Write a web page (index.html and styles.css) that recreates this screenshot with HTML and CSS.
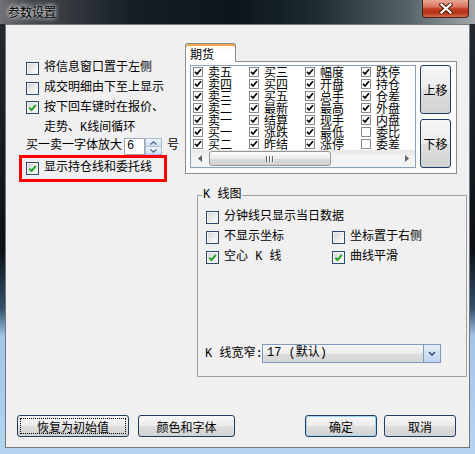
FILE: index.html
```html
<!DOCTYPE html>
<html>
<head>
  <title>参数设置</title>
<link rel="stylesheet" href="styles.css">
</head>
<body>
  <div class="window">
    <div class="titlebar">
      <span class="title">参数设置</span>
      <span class="close">
        <svg width="14" height="11" viewBox="0 0 14 11">
          <path d="M2.5,1.5 L11.5,9.5 M11.5,1.5 L2.5,9.5" stroke="#4a1c12" stroke-width="4.2" stroke-linecap="square"/>
          <path d="M2.5,1.5 L11.5,9.5 M11.5,1.5 L2.5,9.5" stroke="#fff" stroke-width="2.2" stroke-linecap="square"/>
        </svg>
      </span>
    </div>

    <div class="client">
      <div class="main">
        <div class="left">
          <div class="row"><span class="cb"></span>将信息窗口置于左侧</div>
          <div class="row"><span class="cb"></span>成交明细由下至上显示</div>
          <div class="row top"><span class="cb on"></span><span>按下回车键时在报价、<br>走势、K线间循环</span></div>
          <div class="row spin-row">
            买一卖一字体放大
            <span class="spin-input">6</span>
            <span class="spinner">
              <span class="spin-btn"><svg width="7" height="4" viewBox="0 0 7 4"><path d="M0.5,3.5 L3.5,0.8 L6.5,3.5" fill="none" stroke="#4a6a90" stroke-width="1.3"/></svg></span>
              <span class="spin-btn"><svg width="7" height="4" viewBox="0 0 7 4"><path d="M0.5,0.5 L3.5,3.2 L6.5,0.5" fill="none" stroke="#4a6a90" stroke-width="1.3"/></svg></span>
            </span>
            <span class="unit">号</span>
          </div>
          <div class="row marked"><span class="cb on"></span>显示持仓线和委托线</div>
        </div>

        <div class="right">
          <div class="tabbar">
            <span class="tab">期货</span>
            <span class="tabfill"></span>
          </div>
          <div class="tabpanel">
            <div class="listbox">
              <div class="items" id="items"></div>
              <div class="hscroll">
                <span class="arrow"><svg width="4" height="7" viewBox="0 0 4 7"><path d="M4,0 L0,3.5 L4,7 Z" fill="#606060"/></svg></span>
                <span class="track">
                  <span class="thumb"><span class="grip"></span><span class="grip"></span><span class="grip"></span></span>
                </span>
                <span class="arrow"><svg width="4" height="7" viewBox="0 0 4 7"><path d="M0,0 L4,3.5 L0,7 Z" fill="#606060"/></svg></span>
              </div>
            </div>
            <div class="movebtns">
              <button class="btn move">上移</button>
              <button class="btn move">下移</button>
            </div>
          </div>

          <fieldset class="kline">
            <legend>K 线图</legend>
            <div class="krow"><span class="cb"></span>分钟线只显示当日数据</div>
            <div class="krow">
              <span class="kcell"><span class="cb"></span>不显示坐标</span>
              <span class="kcell"><span class="cb"></span>坐标置于右侧</span>
            </div>
            <div class="krow">
              <span class="kcell"><span class="cb on"></span>空心 K 线</span>
              <span class="kcell"><span class="cb on"></span>曲线平滑</span>
            </div>
            <div class="krow width-row">
              <span class="wlabel">K 线宽窄:</span>
              <span class="select">
                <span class="select-text">17 (默认)</span>
                <span class="select-arrow"><svg width="8" height="5" viewBox="0 0 8 5"><path d="M1,1 L4,4 L7,1" fill="none" stroke="#2b4a70" stroke-width="1.6"/></svg></span>
              </span>
            </div>
          </fieldset>
        </div>
      </div>

      <div class="buttons">
        <button class="btn focus">恢复为初始值</button>
        <button class="btn">颜色和字体</button>
        <button class="btn ok">确定</button>
        <button class="btn">取消</button>
      </div>
    </div>
  </div>

  <script>
    var columns = [
      [["卖五",1],["卖四",1],["卖三",1],["卖二",1],["卖一",1],["买一",1],["买二",1]],
      [["买三",1],["买四",1],["买五",1],["最新",1],["结算",1],["涨跌",1],["昨结",1]],
      [["幅度",1],["开盘",1],["总手",1],["最高",1],["现手",1],["最低",1],["涨停",1]],
      [["跌停",1],["持仓",1],["仓差",1],["外盘",1],["内盘",1],["委比",0],["委差",0]]
    ];
    var check = '<svg width="8" height="8" viewBox="0 0 8 8"><path d="M1,3.8 L3,6 L7,1.3" fill="none" stroke="#000" stroke-width="1.7"/></svg>';
    var box = document.getElementById('items');
    columns.forEach(col => {
      col.forEach(item => {
        var el = document.createElement('div');
        el.className = 'item';
        el.innerHTML = '<span class="lcb">' + (item[1] ? check : '') + '</span>' + item[0];
        box.appendChild(el);
      });
    });
  </script>
</body>
</html>
```

FILE: styles.css
```css
body {
    margin: 0;
    font-family: "Liberation Mono", "Noto Sans CJK SC", monospace;
    font-size: 12px;
    color: #000;
  }

  .window {
    width: 475px;
    height: 454px;
    overflow: hidden;
    display: flex;
    flex-direction: column;
    background: linear-gradient(180deg, #262c30 0%, #0c1013 55%, #34506c 68%, #a4c4e6 74%, #b6d4f2 100%);
  }

  .titlebar {
    height: 24px;
    flex: none;
    display: flex;
    align-items: flex-start;
    background: linear-gradient(90deg, #707274 0%, #44484c 7%, #161e24 28%, #0c151c 50%, #1c2a32 66%, #56646a 86%, #a2a8ac 100%);
  }

  .title {
    padding: 5px 0 0 8px;
    line-height: 14px;
    color: #000;
    font-family: "Noto Sans CJK SC", sans-serif;
    text-shadow: 0 0 4px #fff, 0 0 6px rgba(255,255,255,0.8);
  }

  .close {
    margin-left: auto;
    margin-right: 6px;
    width: 45px;
    height: 17px;
    display: flex;
    align-items: center;
    justify-content: center;
    border: 1px solid #4e231c;
    border-top: none;
    border-radius: 0 0 4px 4px;
    background: linear-gradient(180deg, #e9a894 0%, #d87560 40%, #c23f22 52%, #b7331a 75%, #d46a48 100%);
  }

  .client {
    flex: none;
    margin: 0 5px;
    height: 424px;
    box-sizing: border-box;
    border: 1px solid #6f7880;
    background-color: #f0f0f0;
    display: flex;
    flex-direction: column;
  }

  .main {
    display: flex;
    padding: 18px 0 0 13px;
  }

  .left {
    width: 166px;
    padding-top: 15px;
  }

  .row {
    display: flex;
    align-items: center;
    height: 20px;
    line-height: 20px;
    padding-left: 7px;
    white-space: nowrap;
  }

  .row.top {
    height: 40px;
    align-items: flex-start;
  }

  .row.top .cb {
    margin-top: 3px;
  }

  .cb {
    width: 11px;
    height: 11px;
    flex: none;
    margin-right: 5px;
    border: 1px solid #2b4a70;
    box-shadow: inset 0 0 0 1px #f4f4f4;
    background: linear-gradient(135deg, #d2d2d2 0%, #ececec 55%, #ffffff 100%);
    display: inline-flex;
    align-items: center;
    justify-content: center;
  }

  .cb.on::after {
    content: "";
    width: 9px;
    height: 9px;
    background: url("data:image/svg+xml;utf8,<svg xmlns='http://www.w3.org/2000/svg' width='9' height='9' viewBox='0 0 9 9'><path d='M1.3,4.6 L3.5,7 L7.8,1.8' fill='none' stroke='%2322a022' stroke-width='1.9'/></svg>") no-repeat center;
  }

  .spin-row {
    height: 17px;
    line-height: 17px;
  }

  .spin-input {
    width: 17px;
    height: 15px;
    margin-left: 2px;
    padding-left: 2px;
    border: 1px solid #9ba8ba;
    background-color: #fff;
    line-height: 15px;
  }

  .spinner {
    width: 17px;
    height: 17px;
    display: flex;
    flex-direction: column;
  }

  .spin-btn {
    flex: 1;
    display: flex;
    align-items: center;
    justify-content: center;
    border: 1px solid #a9bdd6;
    background: linear-gradient(180deg, #eef4fb, #cfdff1);
  }

  .spin-btn + .spin-btn {
    border-top: none;
  }

  .unit {
    margin-left: 5px;
  }

  .marked {
    width: 138px;
    height: 21px;
    padding-left: 4px;
    border: 3px solid #ff0000;
    line-height: 21px;
  }

  .right {
    width: 272px;
  }

  .tabbar {
    display: flex;
    height: 19px;
  }

  .tab {
    width: 45px;
    padding-left: 4px;
    border: 1px solid #898c95;
    border-bottom: none;
    border-radius: 3px 3px 0 0;
    box-shadow: inset 0 2px 0 #f0a94a;
    background: linear-gradient(180deg, #fdf6ea 0%, #ffffff 40%);
    line-height: 20px;
    font-family: "Noto Sans CJK SC", sans-serif;
  }

  .tabfill {
    flex: 1;
    border-bottom: 1px solid #898c95;
  }

  .tabpanel {
    height: 112px;
    box-sizing: border-box;
    display: flex;
    gap: 4px;
    padding: 3px 0 0 4px;
    border: 1px solid #898c95;
    border-top: none;
    background-color: #fcfcfc;
  }

  .listbox {
    width: 226px;
    height: 103px;
    box-sizing: border-box;
    border: 1px solid #8da1b6;
    background-color: #fff;
    display: flex;
    flex-direction: column;
  }

  .items {
    height: 84px;
    overflow: hidden;
    display: grid;
    grid-auto-flow: column;
    grid-template-rows: repeat(7, 12px);
    grid-auto-columns: 56px;
  }

  .item {
    display: flex;
    align-items: center;
    height: 12px;
    line-height: 12px;
    white-space: nowrap;
    font-family: "Noto Sans CJK SC", sans-serif;
    font-size: 12px;
  }

  .lcb {
    width: 8px;
    height: 8px;
    flex: none;
    margin: 0 5px 0 2px;
    border: 1px solid #8a8a8a;
    background-color: #fff;
    display: inline-flex;
    align-items: center;
    justify-content: center;
  }

  .hscroll {
    height: 17px;
    display: flex;
    background: linear-gradient(180deg, #e6e6e6, #f4f4f4 40%, #f2f2f2);
  }

  .arrow {
    width: 17px;
    display: flex;
    align-items: center;
    justify-content: center;
  }

  .track {
    flex: 1;
    padding: 0 67px 0 1px;
  }

  .thumb {
    height: 15px;
    margin-top: 1px;
    box-sizing: border-box;
    border: 1px solid #979797;
    border-radius: 3px;
    background: linear-gradient(180deg, #fafafa 0%, #ececec 50%, #dadada 51%, #d4d4d4 100%);
    display: flex;
    align-items: center;
    justify-content: center;
    gap: 1px;
  }

  .grip {
    width: 1px;
    height: 6px;
    background-color: #606060;
    border-right: 1px solid #fff;
  }

  .movebtns {
    display: flex;
    flex-direction: column;
    gap: 5px;
  }

  .btn {
    height: 22px;
    padding: 0;
    border: 1px solid #1f3d63;
    border-radius: 3px;
    background: linear-gradient(180deg, #f7f7f7 0%, #ececec 48%, #dedede 52%, #d2d2d2 100%);
    font-family: "Noto Sans CJK SC", sans-serif;
    font-size: 12px;
    color: #000;
  }

  .btn.move {
    width: 31px;
    height: 49px;
  }

  .kline {
    height: 189px;
    box-sizing: border-box;
    margin: 14px 2px 0 12px;
    padding: 5px 8px 13px 8px;
    border: 1px solid #a0a0a0;
    display: flex;
    flex-direction: column;
  }

  .kline legend {
    margin-left: -4px;
    padding: 0 1px;
    line-height: 14px;
  }

  .krow {
    display: flex;
    align-items: center;
    height: 20px;
    line-height: 20px;
    white-space: nowrap;
  }

  .kcell {
    width: 126px;
    display: flex;
    align-items: center;
  }

  .width-row {
    margin-top: auto;
    height: 19px;
  }

  .wlabel {
    margin-left: -1px;
    width: 57px;
  }

  .select {
    width: 179px;
    height: 19px;
    box-sizing: border-box;
    display: flex;
    border: 1px solid #7e9cc0;
    background: linear-gradient(180deg, #f6f6f6 0%, #ececec 50%, #dddddd 51%, #d6d6d6 100%);
  }

  .select-text {
    flex: 1;
    padding-left: 4px;
    line-height: 17px;
  }

  .select-arrow {
    width: 16px;
    display: flex;
    align-items: center;
    justify-content: center;
    border-left: 1px solid #7e9cc0;
    background: linear-gradient(180deg, #e6eff9, #bcd3ec);
  }

  .buttons {
    margin-top: auto;
    display: flex;
    gap: 9px;
    padding: 0 13px 10px 11px;
  }

  .buttons .btn:nth-child(1) { width: 112px; }
  .buttons .btn:nth-child(2) { width: 97px; }
  .buttons .btn:nth-child(3) { width: 72px; margin-left: auto; }
  .buttons .btn:nth-child(4) { width: 72px; margin-left: -2px; }

  .btn.focus {
    outline: 1px dotted #000;
    outline-offset: -4px;
  }

  .btn.ok {
    box-shadow: inset 0 0 0 1px #9fd4f4;
  }
```
